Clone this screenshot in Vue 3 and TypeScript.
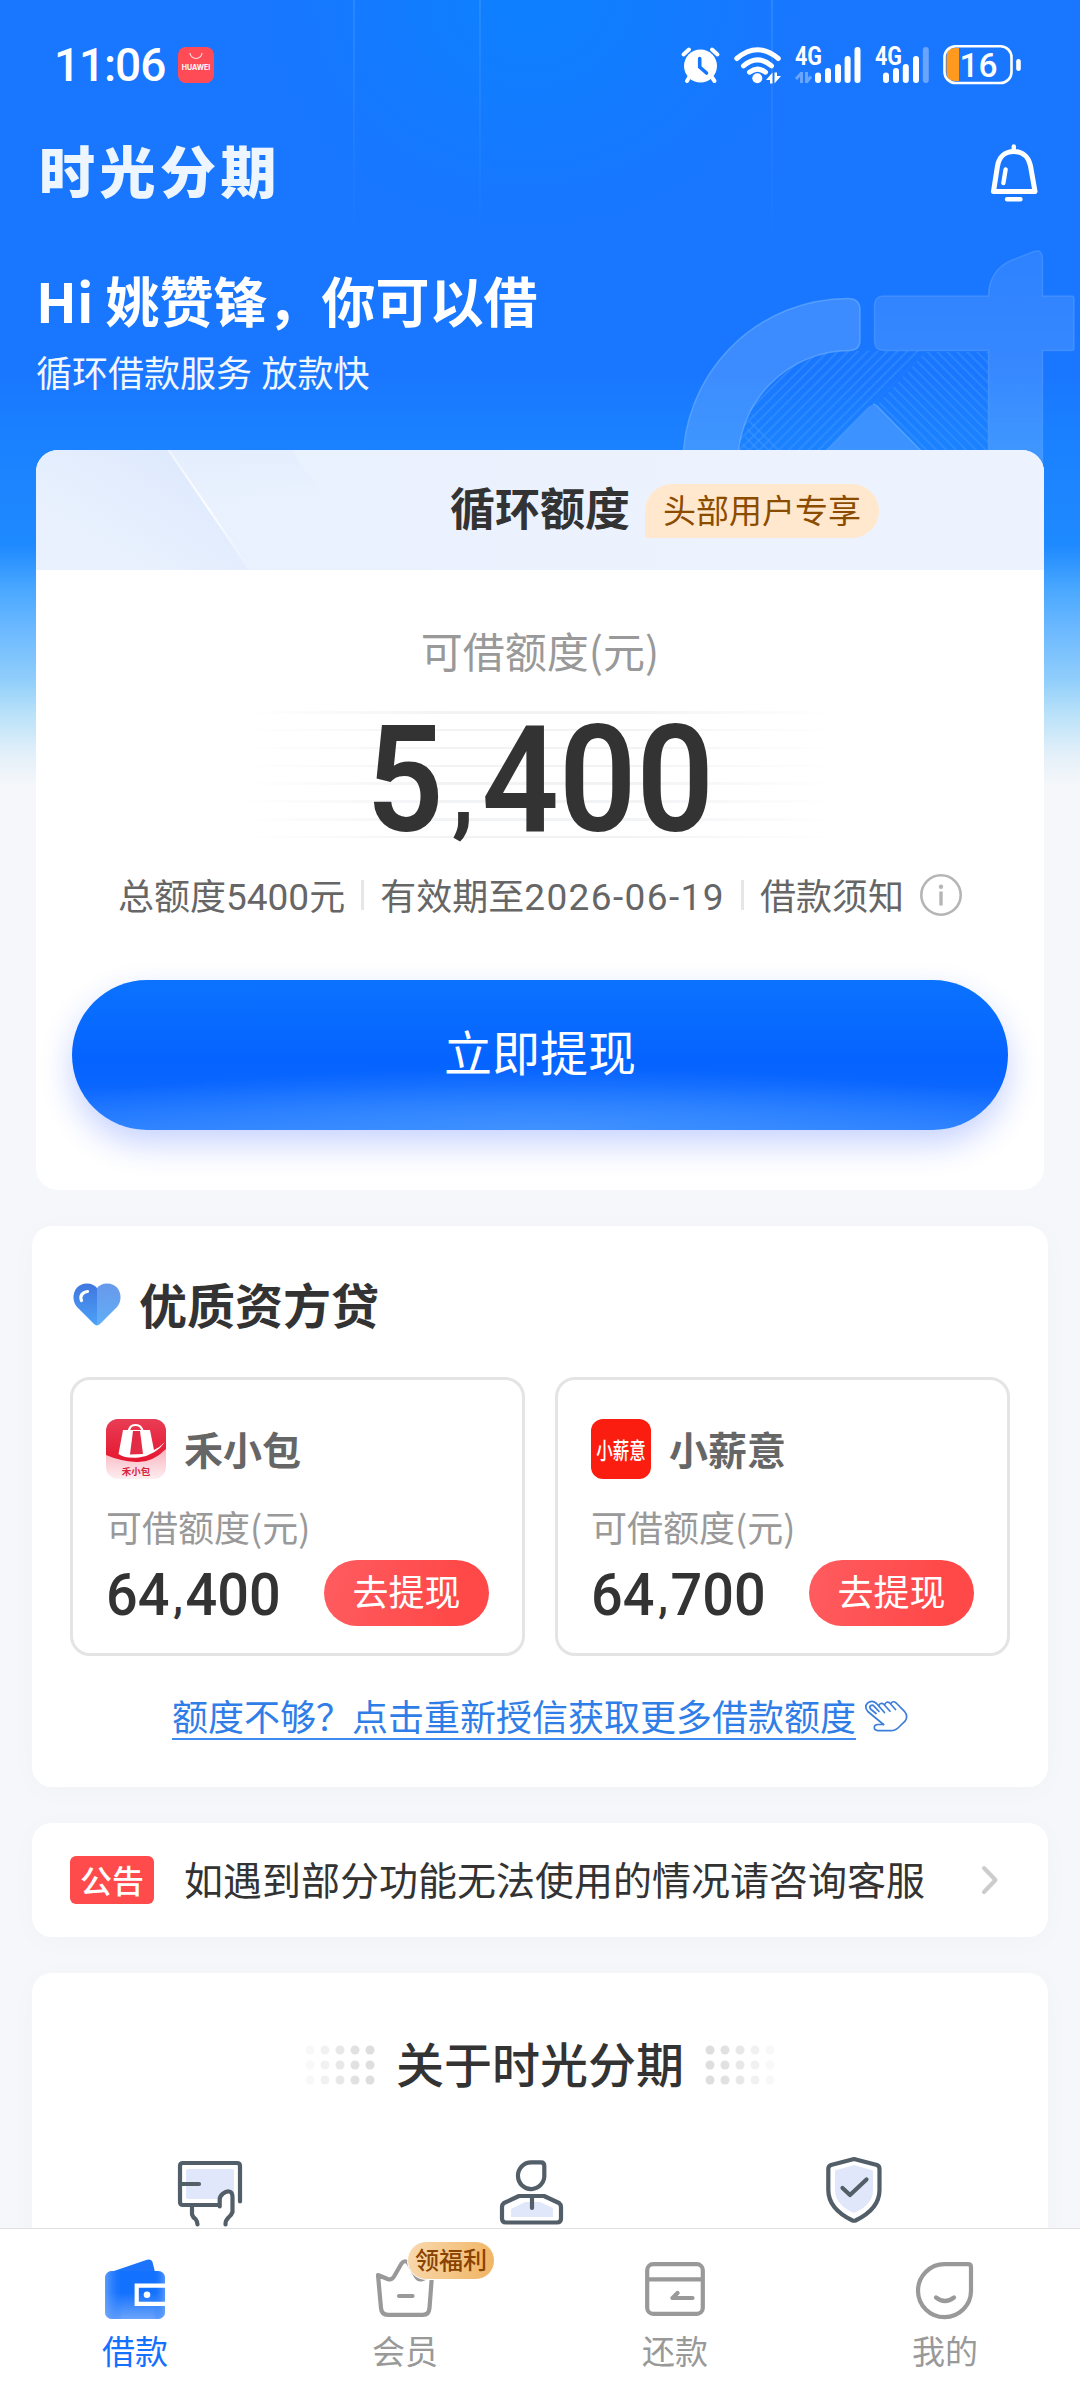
<script setup lang="ts">
interface Lender {
  id: string
  name: string
  amount: [string, string]
}

interface Tab {
  id: string
  label: string
  active?: boolean
  badge?: string
}

const lenders: Lender[] = [
  { id: 'hxb', name: '禾小包', amount: ['64', '400'] },
  { id: 'xxy', name: '小薪意', amount: ['64', '700'] },
]

const tabs: Tab[] = [
  { id: 'loan', label: '借款', active: true },
  { id: 'vip', label: '会员', badge: '领福利' },
  { id: 'repay', label: '还款' },
  { id: 'mine', label: '我的' },
]

const dotOpacity = [0.22, 0.42, 0.7, 0.9, 1]
const dotRows = [5, 20, 35]
</script>

<template>
  <div class="page">
    <div class="hero-bg">
      <i class="ray r1"></i><i class="ray r2"></i><i class="ray r3"></i>
      <svg class="mark" width="400" height="230" viewBox="680 240 400 230">
        <defs>
          <pattern id="hatchA" width="7" height="7" patternUnits="userSpaceOnUse" patternTransform="rotate(45)">
            <rect width="2" height="7" fill="#4a9bff" opacity=".38" />
          </pattern>
          <pattern id="hatchB" width="7" height="7" patternUnits="userSpaceOnUse" patternTransform="rotate(-45)">
            <rect width="2" height="7" fill="#4a9bff" opacity=".38" />
          </pattern>
          <linearGradient id="stem" x1="0" y1="0" x2="0" y2="1">
            <stop offset="0" stop-color="#fff" stop-opacity=".09" />
            <stop offset="1" stop-color="#fff" stop-opacity=".17" />
          </linearGradient>
        </defs>
        <path d="M850 351H926L828 450H815L738 450A110 110 0 0 1 850 351Z" fill="url(#hatchA)" />
        <path d="M926 352H988V460H930L878 404Z" fill="url(#hatchB)" />
        <path d="M752 414L790 460H738Z" fill="url(#hatchB)" />
        <path
          d="M683 466A165 165 0 0 1 848 298.500Q860 298.500 860 310V340Q860 350 850 350.500A112 112 0 0 0 738 466Z"
          fill="#fff" fill-opacity=".16" stroke="#6db0ff" stroke-opacity=".6" stroke-width="1.500"
        />
        <path
          d="M884 296H988.500C989 276 998 266 1012 260L1034 251.500Q1042.500 249 1042.500 259V296H1072Q1074 296 1074 299V348Q1074 350.500 1072 350.500H1042.500V470H988.500V350.500H884Q874.500 350.500 874.500 341V306Q874.500 296 884 296Z"
          fill="url(#stem)" stroke="#6db0ff" stroke-opacity=".35" stroke-width="1.500"
        />
        <path d="M806 470L867 408Q873 402 879 408L940 470Z" fill="#fff" fill-opacity=".15" />
        <path d="M873 404Q877 405 880 409L940 470" fill="none" stroke="#6db0ff" stroke-opacity=".6" stroke-width="1.500" />
      </svg>
    </div>

    <div class="content">
      <header class="status">
        <div class="status-left">
          <span class="time">11:06</span>
          <span class="hw">
            <svg width="14" height="8" viewBox="0 0 14 8"><path d="M1 1a6 5.500 0 0 0 12 0" fill="none" stroke="#fff" stroke-opacity=".8" stroke-width="1.200" /></svg>
            <b>HUAWEI</b>
          </span>
        </div>
        <svg class="sys" width="344" height="44" viewBox="680 42 344 44" fill="none">
          <g stroke="#fff" stroke-width="4" stroke-linecap="round">
            <circle cx="700.500" cy="65" r="16.500" fill="#fff" stroke="none" />
            <path d="M683.500 53.500L689 48.500M717.500 53.500L712 48.500M690 75L687 80M711 75L714.500 80" />
            <path d="M699.700 57.500V66L706.500 72" stroke="#1475ff" stroke-width="3.600" />
          </g>
          <g stroke="#fff" stroke-width="5" stroke-linecap="round">
            <path d="M736.800 57.500Q757.500 40 778.300 57.500" />
            <path d="M743.500 64.800Q757.500 53 771.500 64.800" />
            <path d="M749.500 71.200Q757.500 65 765.500 71.200" />
            <circle cx="757.300" cy="77.300" r="5" fill="#fff" stroke="none" />
          </g>
          <path d="M772.500 82.500V71.500L766 79H770V82.500ZM774.500 71.500V82.500L781 75H777V71.500Z" fill="#fff" />
          <path d="M801.500 71V82M796 78L801 72.500M806.500 71V82M811 75.500L807 80.500" stroke="#fff" stroke-opacity=".35" stroke-width="3" />
          <g stroke="#fff" stroke-width="6" stroke-linecap="round">
            <path d="M818 74.500V79M828 70V79M838 66V79M847.600 58V79M857.500 49V79" />
            <path d="M886 74.500V79M896 70V79M905.800 66V79M916 58V79" />
            <path d="M925.800 49V79" stroke-opacity=".35" />
          </g>
          <text x="795" y="64" textLength="27" lengthAdjust="spacingAndGlyphs" class="net">4G</text>
          <text x="875" y="64" textLength="27" lengthAdjust="spacingAndGlyphs" class="net">4G</text>
          <path d="M955 47H959V80H955Q946.500 80 946.500 71V56Q946.500 47 955 47Z" fill="#ff9a1f" />
          <rect x="944.500" y="45.300" width="67" height="36.700" rx="11" stroke="#fff" stroke-width="2.600" />
          <rect x="1016.200" y="58" width="4.600" height="12" rx="2.300" fill="#fff" />
          <text x="959.500" y="75.500" textLength="38" lengthAdjust="spacingAndGlyphs" class="bat">16</text>
        </svg>
      </header>

      <div class="appbar">
        <h1 class="brand">时光分期</h1>
        <svg class="bell" width="50" height="62" viewBox="989 140 50 62" fill="none" stroke="#fff" stroke-width="5" stroke-linecap="round" stroke-linejoin="round">
          <path d="M1013.800 144.500V149" stroke-width="4.400" />
          <path d="M993.500 189.500L997.500 164C999 155 1005 149.500 1013.800 149.500S1028.600 155 1030.500 164L1035 189.500Z" />
          <path d="M1005.600 167.500L1003.400 181M1007 197.300H1020.500" stroke-width="4.400" />
        </svg>
      </div>

      <h2 class="hello">Hi 姚赞锋，你可以借</h2>
      <p class="sub">循环借款服务 放款快</p>

      <section class="quota">
        <div class="quota-head">
          <svg class="shine" width="300" height="120" viewBox="0 0 300 120">
            <defs>
              <linearGradient id="sh1" x1="1" y1="0" x2="0.200" y2="0.700">
                <stop offset="0" stop-color="#d6e4fc" />
                <stop offset="1" stop-color="#d6e4fc" stop-opacity="0" />
              </linearGradient>
              <linearGradient id="sh2" x1="0" y1="0" x2="0" y2="1">
                <stop offset="0" stop-color="#fff" stop-opacity=".4" />
                <stop offset=".5" stop-color="#fff" stop-opacity=".85" />
                <stop offset="1" stop-color="#fff" stop-opacity="0" />
              </linearGradient>
              <linearGradient id="sh3" x1="0" y1="0" x2="0" y2="1">
                <stop offset="0" stop-color="#e0ebfd" stop-opacity=".5" />
                <stop offset=".5" stop-color="#e0ebfd" stop-opacity="0" />
              </linearGradient>
            </defs>
            <path d="M0 0H132L212 120H0Z" fill="url(#sh1)" opacity=".8" />
            <path d="M132 0H256L300 66V120H212Z" fill="url(#sh3)" />
            <path d="M131 0H134L212 115H210Z" fill="url(#sh2)" />
          </svg>
          <span class="quota-title">循环额度<em class="vip-tag">头部用户专享</em></span>
        </div>
        <p class="quota-label">可借额度(元)</p>
        <div class="amount"><span class="din">5<i>,</i>400</span></div>
        <div class="meta">
          <span>总额度<b>5400</b>元</span>
          <i class="sep"></i>
          <span>有效期至<b class="date">2026-06-19</b></span>
          <i class="sep"></i>
          <span>借款须知</span>
          <svg class="info" width="42" height="42" viewBox="0 0 42 42" fill="none">
            <circle cx="21" cy="21" r="19.700" stroke="#b5b5b5" stroke-width="2.600" />
            <circle cx="21" cy="12.700" r="2.200" fill="#b5b5b5" />
            <path d="M21 17.500V31.500" stroke="#b5b5b5" stroke-width="3.400" />
          </svg>
        </div>
        <button class="cta">立即提现</button>
      </section>

      <section class="card partners">
        <div class="partners-title">
          <svg width="48" height="43" viewBox="0 0 48 43">
            <defs>
              <linearGradient id="hl" x1="0" y1="0" x2="0" y2="1"><stop offset="0" stop-color="#4076df" /><stop offset="1" stop-color="#4ba2f8" /></linearGradient>
              <linearGradient id="hr" x1="0" y1="0" x2="0" y2="1"><stop offset="0" stop-color="#6799ea" /><stop offset="1" stop-color="#62aef8" /></linearGradient>
            </defs>
            <path d="M24 42.500C22 42 21 41 20 40L4 24C-3 16 .5 .5 14 .5C18 .5 22 2.500 24 5Z" fill="url(#hl)" />
            <path d="M24 42.500C26 42 27 41 28 40L44 24C51 16 47.500 .5 34 .5C30 .5 26 2.500 24 5Z" fill="url(#hr)" />
            <path d="M14.500 8.500C9.500 9 6.500 13 8.500 17.500" fill="none" stroke="#fff" stroke-width="3.200" stroke-linecap="round" />
          </svg>
          <h3>优质资方贷</h3>
        </div>
        <div class="lenders">
          <article v-for="l in lenders" :key="l.id" class="lender">
            <div class="lender-head">
              <div v-if="l.id === 'hxb'" class="logo hxb">
                <svg width="60" height="60" viewBox="0 0 60 60">
                  <defs>
                    <linearGradient id="bagbg" x1="0" y1="0" x2="0" y2="1"><stop offset="0" stop-color="#e83d55" /><stop offset="1" stop-color="#e5162f" /></linearGradient>
                    <linearGradient id="bagft" x1="0" y1="0" x2="0" y2="1"><stop offset=".55" stop-color="#fbb9c4" /><stop offset="1" stop-color="#fdeef1" /></linearGradient>
                  </defs>
                  <rect width="60" height="60" fill="url(#bagft)" />
                  <path d="M0 0H60V30Q46 44 30 43T0 36Z" fill="url(#bagbg)" />
                  <path d="M17 11H44L48 31Q54 28 59 23Q50 36 33 38.500Q20 40 12.500 35Z" fill="#fff" />
                  <path d="M27 12H34L37 35L24 35.500Z" fill="#e22b44" />
                  <path d="M23 13Q23 6 29.500 6T36.500 13" fill="none" stroke="#fff" stroke-width="2.200" />
                </svg>
                <span>禾小包</span>
              </div>
              <div v-else class="logo xxy"><span>小薪意</span></div>
              <strong>{{ l.name }}</strong>
            </div>
            <p class="lender-label">可借额度(元)</p>
            <div class="lender-row">
              <span class="lender-amount">{{ l.amount[0] }}<i>,</i>{{ l.amount[1] }}</span>
              <button class="go">去提现</button>
            </div>
          </article>
        </div>
        <div class="more">
          <a>额度不够？点击重新授信获取更多借款额度</a>
          <svg width="44" height="34" viewBox="865 1699 44 34" fill="none" stroke="#3d7edb" stroke-width="1.700" stroke-linecap="round" stroke-linejoin="round">
            <path d="M884.500 1724.500L868.800 1711.500Q865 1706.800 868.500 1703.200Q873 1699.600 877.500 1703.500L885.500 1712.500" />
            <path d="M877 1713.500L871.500 1709Q870 1706.800 871.800 1705.500Q873.600 1704.500 875 1706.200L880 1711.500" />
            <path d="M879.800 1705.500Q881.500 1702.300 884.500 1704L891 1711.200M885.800 1704.500Q887.500 1701 890.500 1702.800L896.500 1709.500M892 1703.500Q894 1700.300 897.200 1703L905.700 1711.700Q909.500 1716 906 1721.200L900 1727Q896.500 1730.700 892 1730.700H879Q875.300 1730.500 875.300 1727.600T879 1724.500H884.500" />
          </svg>
        </div>
      </section>

      <section class="card notice">
        <span class="tag">公告</span>
        <p>如遇到部分功能无法使用的情况请咨询客服</p>
        <svg width="18" height="30" viewBox="0 0 18 30" fill="none"><path d="M3 3L14.500 15L3 27" stroke="#ccc" stroke-width="4" stroke-linecap="round" stroke-linejoin="round" /></svg>
      </section>

      <section class="card about">
        <div class="about-title">
          <svg width="70" height="40" viewBox="0 0 70 40">
            <template v-for="y in dotRows" :key="y">
              <circle v-for="(o, i) in dotOpacity" :key="i" :cx="5 + i * 15" :cy="y" r="4.500" fill="#dedede" :opacity="o" />
            </template>
          </svg>
          <h3>关于时光分期</h3>
          <svg width="70" height="40" viewBox="0 0 70 40">
            <template v-for="y in dotRows" :key="y">
              <circle v-for="(o, i) in dotOpacity" :key="i" :cx="65 - i * 15" :cy="y" r="4.500" fill="#dedede" :opacity="o" />
            </template>
          </svg>
        </div>
        <div class="features">
          <div class="feature">
            <svg width="72" height="76" viewBox="175 2155 72 76" fill="none" stroke="#525e68" stroke-width="4.200" stroke-linecap="round" stroke-linejoin="round">
              <rect x="187" y="2169" width="48" height="30" rx="2" fill="#e0e7fa" stroke="none" />
              <path d="M233 2225V2196Q233 2191.500 229 2191.500L221 2197V2225Z" fill="#fff" stroke="none" />
              <path d="M241 2201.500V2166Q241 2163 238 2163H184Q181 2163 181 2166V2202Q181 2205 184 2205H220M182 2184H200" />
              <path d="M220.700 2206.500V2199C221 2195 226 2191 230 2191.500Q233.500 2192 233.500 2197V2212Q232.500 2215 229.500 2217.500Q226.300 2220.500 226.500 2224.500M193 2206V2214.500Q194 2217.500 196.500 2219Q198.500 2221.500 198.500 2224.500" />
            </svg>
          </div>
          <div class="feature">
            <svg width="72" height="76" viewBox="496 2155 72 76" fill="none" stroke="#525e68" stroke-width="4.200" stroke-linecap="round" stroke-linejoin="round">
              <path d="M511 2217V2209L525 2202H540L553 2208V2217Z" fill="#e0e7fa" stroke="none" />
              <path d="M531.500 2162.300H541Q544.300 2162.300 544.300 2166V2174.500A13.200 13.400 0 1 1 531.500 2162.300Z" />
              <path d="M519 2196H544L559 2203Q561 2204.500 561 2207V2218.500Q561 2222.500 557 2222.500H506Q502 2222.500 502 2218.500V2207Q502 2204.500 504 2203ZM532 2197V2208" />
            </svg>
          </div>
          <div class="feature">
            <svg width="72" height="76" viewBox="818 2155 72 76" fill="none" stroke="#525e68" stroke-width="4.200" stroke-linecap="round" stroke-linejoin="round">
              <path d="M854 2165L873 2170.500V2191C873 2201 864 2209 854 2213C844 2209 835 2201 835 2191V2170.500Z" fill="#e0e7fa" stroke="none" />
              <path d="M854 2159L877 2165Q879.500 2166 879.500 2169V2190C879.500 2204 869 2214 855.500 2220.500Q854 2221 852.500 2220.500C839 2214 828.300 2204 828.300 2190V2169Q828.300 2166 831 2165Z" />
              <path d="M842.500 2188L850 2195L866.500 2179.500" />
            </svg>
          </div>
        </div>
      </section>
    </div>

    <nav class="tabbar">
      <div v-for="t in tabs" :key="t.id" class="tab" :class="{ active: t.active }">
        <div class="tab-icon">
          <svg v-if="t.id === 'loan'" width="66" height="66" viewBox="102 2256 66 66">
            <defs>
              <linearGradient id="w1" x1="0" y1="0" x2="0" y2="1"><stop offset=".45" stop-color="#1271fe" /><stop offset="1" stop-color="#6ba3fb" /></linearGradient>
              <linearGradient id="w2" x1="0" y1="0" x2="1" y2="0"><stop offset="0" stop-color="#76abfb" /><stop offset=".3" stop-color="#1271fe" stop-opacity="0" /><stop offset=".8" stop-color="#1271fe" stop-opacity="0" /><stop offset="1" stop-color="#6ba3fb" /></linearGradient>
            </defs>
            <path d="M111 2272L147 2259.800Q151 2258.800 152.500 2262L155 2272Z" fill="#1b74fb" />
            <rect x="105" y="2271" width="60" height="48" rx="7" fill="url(#w1)" />
            <rect x="105" y="2271" width="60" height="48" rx="7" fill="url(#w2)" opacity=".75" />
            <path d="M166 2285.700H136.700V2303.800H166" fill="none" stroke="#fff" stroke-width="4.200" />
            <circle cx="147" cy="2294.800" r="3.300" fill="#fff" />
          </svg>
          <svg v-else-if="t.id === 'vip'" width="66" height="66" viewBox="372 2256 66 66" fill="none" stroke="#999" stroke-width="4.200" stroke-linejoin="round" stroke-linecap="round">
            <path d="M378 2275L387.500 2279Q391.500 2280.500 394 2276.500L401.500 2263.500Q405 2259 408.500 2263.500L416 2276.500Q418.500 2280.500 422.500 2279L432 2275L429.500 2308Q429 2314.800 423 2314.800H388Q381.500 2314.800 381 2308Z" />
            <path d="M399 2296H412.500" />
          </svg>
          <svg v-else-if="t.id === 'repay'" width="66" height="66" viewBox="642 2256 66 66" fill="none" stroke="#999" stroke-width="4.200" stroke-linejoin="round" stroke-linecap="round">
            <rect x="647.200" y="2264.200" width="55.600" height="49.600" rx="6" />
            <path d="M648 2279.300H702M677.500 2293L672.500 2298H692.500" />
          </svg>
          <svg v-else width="66" height="66" viewBox="912 2256 66 66" fill="none" stroke="#999" stroke-width="4.200" stroke-linejoin="round" stroke-linecap="round">
            <path d="M944.500 2264.200H968Q971 2264.200 971 2267.200V2290.500A26.500 26.500 0 1 1 944.500 2264.200Z" />
            <path d="M936 2297.500Q945 2304.500 954 2297.500" />
          </svg>
          <span v-if="t.badge" class="badge">{{ t.badge }}</span>
        </div>
        <span class="tab-label">{{ t.label }}</span>
      </div>
    </nav>
  </div>
</template>

<style>
body {
  margin: 0;
}
</style>

<style scoped>
* {
  box-sizing: border-box;
}
.page {
  position: relative;
  width: 1080px;
  height: 2388px;
  display: flex;
  flex-direction: column;
  overflow: hidden;
  background: #f5f7fa;
  font-family: 'Noto Sans CJK SC', sans-serif;
  color: #333;
}
h1, h2, h3, p {
  margin: 0;
}
i, em {
  font-style: normal;
}
button {
  border: 0;
  padding: 0;
  font-family: inherit;
  color: #fff;
}
.hero-bg {
  position: absolute;
  left: 0;
  top: 0;
  width: 100%;
  height: 790px;
  background:
    radial-gradient(ellipse 280px 240px at 530px 0, rgba(8, 133, 255, 0.7), rgba(8, 133, 255, 0) 100%),
    linear-gradient(180deg, #1976ff 0, #1976ff 370px, #1a80ff 430px, #1e8aff 545px, #4aa8ff 590px, #6cb9ff 630px, #90cefb 680px, #bae2f9 715px, #e4f0f9 755px, #f5f7fa 785px);
}
.ray {
  position: absolute;
  top: 0;
  width: 2px;
  height: 240px;
  background: linear-gradient(180deg, rgba(90, 165, 255, 0.3), rgba(90, 165, 255, 0));
}
.r1 { left: 353px; }
.r2 { left: 479px; }
.r3 { left: 771px; }
.mark {
  position: absolute;
  left: 680px;
  top: 240px;
}
.content {
  position: relative;
  height: 2228px;
  overflow: hidden;
}
.status {
  height: 129px;
  padding: 0 56px 0 54px;
  display: flex;
  align-items: center;
  justify-content: space-between;
}
.status-left {
  display: flex;
  align-items: center;
  gap: 9px;
}
.time {
  width: 115px;
  font: 500 46px/60px Roboto, sans-serif;
  letter-spacing: -1.1px;
  color: #fff;
  white-space: nowrap;
}
.hw {
  width: 36px;
  height: 36px;
  border-radius: 8px;
  background: #fe4b56;
  display: flex;
  flex-direction: column;
  align-items: center;
  padding-top: 5px;
}
.hw svg {
  display: block;
}
.hw b {
  font: 700 7px/8px Inter, sans-serif;
  color: #fff;
  margin-top: 4px;
}
.net {
  font: 700 25px Roboto, sans-serif;
  fill: #fff;
}
.bat {
  font: 500 34px Roboto, sans-serif;
  fill: #fff;
}
.appbar {
  height: 87px;
  padding: 0 41px 0 39px;
  display: flex;
  align-items: center;
  justify-content: space-between;
}
.brand {
  font-size: 56px;
  line-height: 80px;
  font-weight: 900;
  letter-spacing: 4.5px;
  color: #edf6ff;
  padding-bottom: 7px;
}
.hello {
  margin: 48px 0 0 36px;
  font-size: 54px;
  line-height: 72px;
  font-weight: 700;
  color: #fff;
}
.sub {
  margin: 8px 0 0 36px;
  font-size: 36px;
  line-height: 54px;
  word-spacing: 1.5px;
  color: #f1f7ff;
}
.quota {
  margin: 52px 36px 0;
  height: 740px;
  background: #fff;
  border-radius: 22px;
  overflow: hidden;
  display: flex;
  flex-direction: column;
  align-items: center;
}
.quota-head {
  position: relative;
  width: 100%;
  height: 120px;
  padding-bottom: 6px;
  display: flex;
  align-items: center;
  justify-content: center;
  background: linear-gradient(90deg, #e9f1fe, #edf3fe);
}
.shine {
  position: absolute;
  left: 0;
  top: 0;
}
.quota-title {
  position: relative;
  font-size: 45px;
  line-height: 66px;
  font-weight: 700;
}
.vip-tag {
  position: absolute;
  left: 195px;
  top: 10px;
  width: 234px;
  height: 54px;
  border-radius: 27px 27px 27px 3px;
  background: #ffe8cd;
  color: #8c4c00;
  font-size: 33px;
  line-height: 50px;
  font-weight: 400;
  text-align: center;
  white-space: nowrap;
}
.quota-label {
  margin-top: 50px;
  font-size: 42px;
  line-height: 60px;
  color: #999;
}
.amount {
  width: 590px;
  height: 150px;
  margin-top: 25px;
  display: flex;
  justify-content: center;
  background:
    linear-gradient(90deg, #fff, rgba(255, 255, 255, 0) 35%, rgba(255, 255, 255, 0) 65%, #fff),
    repeating-linear-gradient(180deg, transparent 0, transparent 6px, #f2f3f5 6px, #f2f3f5 8.500px, transparent 8.500px, transparent 17.850px) 0 0 / 100% 134px no-repeat;
}
.din {
  font: 600 149px/150px Roboto, sans-serif;
  transform: scaleX(0.91);
  color: #333;
  white-space: nowrap;
}
.din i {
  position: relative;
  top: -7px;
  padding: 0 8px 0 9px;
  font-size: 100px;
  font-weight: 700;
  line-height: 1;
}
.meta {
  margin-top: 19px;
  height: 42px;
  display: flex;
  align-items: center;
  font-size: 36px;
  color: #666;
  white-space: nowrap;
}
.meta span {
  line-height: 54px;
  padding-bottom: 2px;
}
.meta b {
  font: 400 37px/40px Roboto, sans-serif;
}
.meta .date {
  letter-spacing: 1.400px;
}
.sep {
  width: 3px;
  height: 30px;
  margin: 0 16px;
  background: #e6e6e6;
}
.info {
  margin-left: 16px;
}
.cta {
  margin-top: 64px;
  width: 936px;
  height: 150px;
  flex: none;
  border-radius: 75px;
  font-size: 48px;
  line-height: 140px;
  padding-bottom: 10px;
  background:
    radial-gradient(ellipse 560px 62px at 50% 100%, rgba(72, 152, 255, 0.75), rgba(72, 152, 255, 0)),
    linear-gradient(180deg, #0b72ff 0, #0563ff 55%, #0a66ff 70%, #2a7fff 100%);
  box-shadow: 0 14px 32px rgba(20, 70, 255, 0.24);
}
.card {
  margin: 36px 32px 0;
  background: #fff;
  border-radius: 20px;
  box-shadow: 0 4px 30px rgba(0, 0, 0, 0.022);
}
.partners {
  height: 561px;
  padding: 47px 38px 0;
}
.partners-title {
  display: flex;
  align-items: center;
  gap: 18px;
  padding-left: 3px;
}
.partners-title svg {
  margin-top: 3px;
}
.partners-title h3 {
  font-size: 48px;
  line-height: 60px;
  font-weight: 700;
}
.lenders {
  margin-top: 44px;
  display: flex;
  gap: 30px;
}
.lender {
  width: 455px;
  height: 279px;
  border: 3px solid #e4e4e4;
  border-radius: 20px;
  padding: 39px 33px 0;
}
.lender-head {
  display: flex;
  align-items: center;
  gap: 18px;
}
.lender-head strong {
  font-size: 39px;
  line-height: 56px;
  font-weight: 700;
  color: #666;
  padding-bottom: 2px;
}
.logo {
  position: relative;
  width: 60px;
  height: 60px;
  border-radius: 12px;
  overflow: hidden;
}
.hxb span {
  position: absolute;
  left: 0;
  right: 0;
  bottom: 2px;
  text-align: center;
  font-size: 9.500px;
  line-height: 12px;
  font-weight: 700;
  color: #d9223b;
}
.xxy {
  background: #fa1d10;
  display: flex;
  align-items: center;
  justify-content: center;
}
.xxy span {
  font-size: 16.500px;
  line-height: 24px;
  font-weight: 500;
  color: #fff;
  white-space: nowrap;
  transform: scaleY(1.4);
}
.lender-label {
  margin-top: 20px;
  font-size: 36px;
  line-height: 54px;
  color: #999;
}
.lender-row {
  margin-top: 7px;
  height: 66px;
  display: flex;
  align-items: center;
  justify-content: space-between;
}
.lender-amount {
  width: 184px;
  padding-top: 3px;
  font: 500 60px/66px Roboto, sans-serif;
  transform: scaleX(0.93);
  transform-origin: 0 50%;
  white-space: nowrap;
}
.lender-amount i {
  position: relative;
  top: -3px;
  padding: 0 3px 0 4px;
  font-size: 42px;
  font-weight: 700;
  line-height: 1;
}
.go {
  width: 165px;
  height: 66px;
  border-radius: 33px;
  background: linear-gradient(100deg, #ff5c60, #ff4848 80%);
  font-size: 36px;
  line-height: 61px;
  padding-bottom: 5px;
}
.more {
  margin-top: 34px;
  display: flex;
  justify-content: center;
  gap: 8px;
  height: 50px;
}
.more a {
  height: 50px;
  font-size: 36px;
  line-height: 50px;
  color: #2f7ee8;
  border-bottom: 2px solid #3f8bf0;
}
.more svg {
  margin-top: 9px;
}
.notice {
  height: 114px;
  padding: 0 49px 0 38px;
  display: flex;
  align-items: center;
}
.tag {
  width: 84px;
  height: 48px;
  border-radius: 6px;
  background: #ff4b4b;
  color: #fff;
  font-size: 32px;
  font-weight: 500;
  line-height: 47px;
  text-align: center;
}
.notice p {
  flex: 1;
  margin-left: 30px;
  font-size: 39px;
  line-height: 56px;
  padding-bottom: 4px;
}
.about {
  height: 400px;
  padding-top: 59px;
}
.about-title {
  display: flex;
  align-items: center;
  justify-content: center;
  gap: 21px;
}
.about-title svg {
  margin-top: 6px;
}
.about-title h3 {
  font-size: 48px;
  line-height: 60px;
  font-weight: 500;
}
.features {
  margin-top: 63px;
  padding-left: 17px;
  display: flex;
}
.feature {
  width: 322px;
  display: flex;
  justify-content: center;
}
.tabbar {
  position: relative;
  height: 160px;
  display: flex;
  background: #fff;
  border-top: 1px solid #dfdfdf;
}
.tab {
  flex: 1;
  padding-top: 27px;
  display: flex;
  flex-direction: column;
  align-items: center;
  color: #999;
}
.tab.active {
  color: #1470ff;
}
.tab-icon {
  position: relative;
  height: 66px;
}
.tab-icon svg {
  display: block;
}
.tab-label {
  margin-top: 4px;
  font-size: 33px;
  line-height: 48px;
}
.badge {
  position: absolute;
  left: 35px;
  top: -15px;
  width: 88px;
  height: 39px;
  border: 1.500px solid #fff;
  border-radius: 20px;
  background: linear-gradient(100deg, #f9d9af, #f0b462);
  color: #8a4200;
  font-size: 24px;
  font-weight: 500;
  line-height: 33px;
  text-align: center;
  white-space: nowrap;
}
</style>
